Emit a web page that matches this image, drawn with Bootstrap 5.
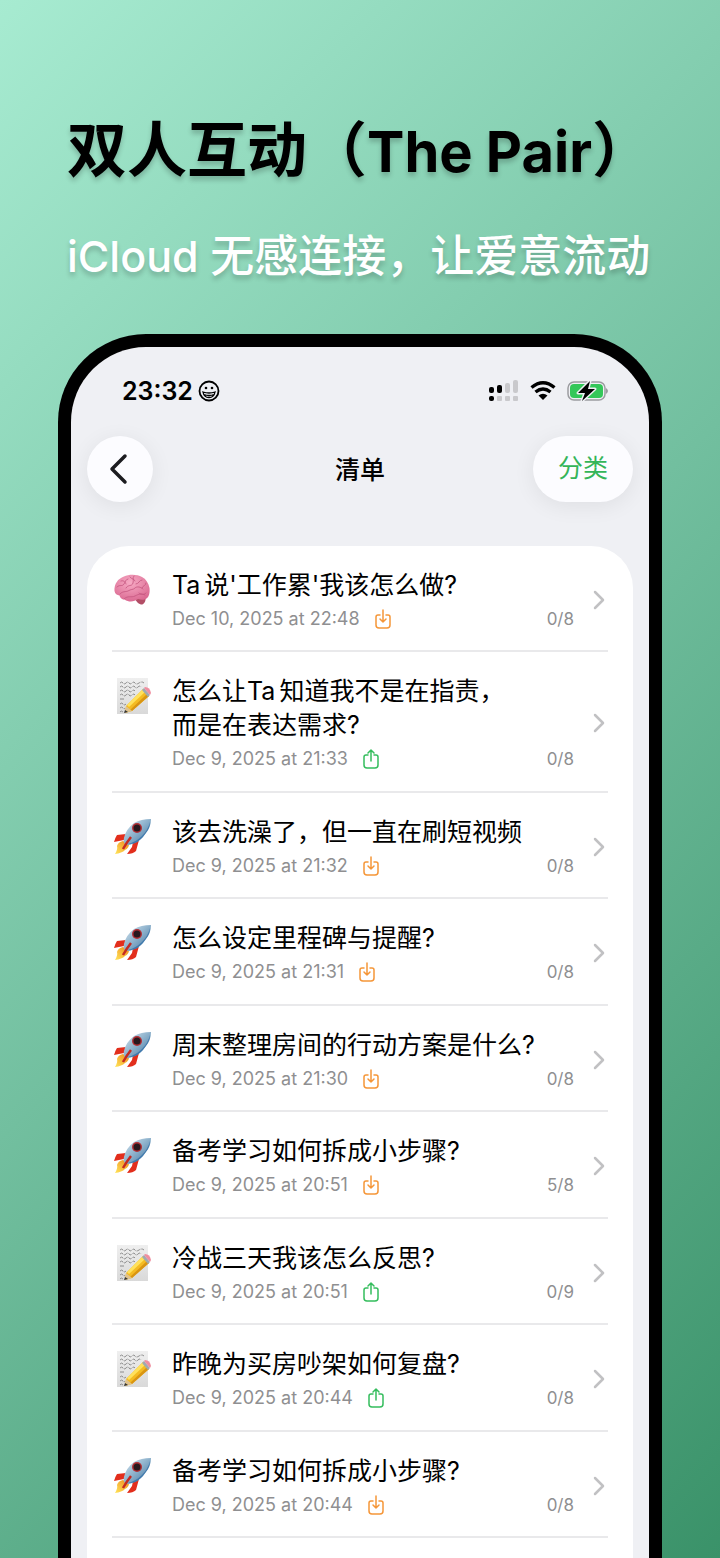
<!DOCTYPE html>
<html lang="zh-CN">
<head>
<meta charset="utf-8">
<meta name="viewport" content="width=device-width, initial-scale=1">
<title>双人互动（The Pair）</title>
<link href="https://cdn.jsdelivr.net/npm/bootstrap@5.3.0/dist/css/bootstrap.min.css" rel="stylesheet">
<style>
body{font-family:Inter,"Noto Sans CJK SC",sans-serif;color:#000}
.promo{background:linear-gradient(135deg,#a7ebd1 0%,#72bf9f 50%,#3a9269 100%);padding:110px 58px 0}
.promo-copy{padding:0 9px;text-shadow:0 4px 5px rgba(0,0,0,.2);white-space:nowrap}
.promo-copy h1{font-size:60px;line-height:80px;font-weight:700}
.promo-copy h1 span{font-size:56px;line-height:1}
.promo-copy p{font-size:44px;line-height:64px;font-weight:500;margin-top:34px}
.promo-copy p span{font-size:43px;line-height:1}
.phone{border:13px solid #000;border-bottom:0;border-radius:88px 88px 0 0;background:#eff0f4;margin-top:46px;min-height:0}
.status-bar{padding:30px 40px 0 51px;height:60px}
.clock{font-size:25px;line-height:28px;font-weight:600}
.top-bar{display:grid;grid-template-columns:1fr auto 1fr;padding:29px 16px 0}
.top-bar h2{font-size:25px;line-height:34px;font-weight:500;padding-top:2px}
.glass{background:#fcfcff;border-radius:33px;height:66px;box-shadow:0 4px 22px rgba(0,0,0,.07)}
.glass:hover{background:#fff}
.back-btn{width:66px}
.sort-btn{width:100px;font-size:25px;color:#34b559}
.topics{background:#fff;border-radius:42px 42px 0 0;margin:44px 16px 0;padding:0 25px 48px}
.topic{padding:22px 0 19px;border-bottom:2px solid #e9e9eb;color:#000}
li:nth-child(even) .topic{padding-bottom:20px}
.topic-icon{width:40px;height:40px;margin:2px 20px 0 0}
.topic-title{font-size:25px;line-height:34px}
.topic-title .latin{margin-right:4px}
.topic-meta{font-size:18px;line-height:24px;margin-top:5px;color:#8f8f91}
.topic-count{font-size:17px}
.direction{width:18px;height:22px;margin-left:14px}
.incoming{color:#f59638}
.outgoing{color:#35bd5d}
.chevron{width:14px;height:22px;margin:0 2px 0 18px}
</style>
</head>
<body>
<svg class="position-absolute" width="0" height="0" aria-hidden="true">
<defs>
<linearGradient id="hull" x1="0" y1="0" x2="1" y2="1"><stop offset="0" stop-color="#dbe9f2"/><stop offset=".45" stop-color="#93b6cf"/><stop offset="1" stop-color="#3b6f9c"/></linearGradient>
<linearGradient id="flame" x1="1" y1="0" x2="0" y2="1"><stop offset="0" stop-color="#f08a1c"/><stop offset="1" stop-color="#ffe65a"/></linearGradient>
<radialGradient id="cortex" cx=".45" cy=".3" r=".75"><stop offset="0" stop-color="#f7aac4"/><stop offset="1" stop-color="#d9668f"/></radialGradient>
<linearGradient id="paper" x1="0" y1="0" x2="0" y2="1"><stop offset="0" stop-color="#efefef"/><stop offset="1" stop-color="#d9d9d9"/></linearGradient>
</defs>
<symbol id="brain" viewBox="0 0 40 40">
<path d="M23 28c1 4 4 6.500 7 6.500 2.500-.5 4-4 3.500-7z" fill="#b24e66"/>
<path d="M2.500 21C2 14 6 8.500 12 6.500c5-2.500 13-2.500 18 .5 4 2 6.500 6 7.500 11 .5 5-.5 9-3 10.500-3 2-6 1-8.500.5-4 3-9 3.500-13.500.5-3 0-4.500-2-5-4-2.500-.5-4.500-1.500-5-4.500z" fill="url(#cortex)"/>
<path d="M8 24c2-3 6-2 8-3 3-2 5-1 7-3s6-1 8 1M12 29c4-4 7-1 11-3s6-3 10-1M5 17c3-3 5 0 7-3s1-4 4-5M14 18c2-4 6-1 7-5s-1-4 1-7M24 14c3 0 3-4 6-4M30 18c1-3 4-2 4-5M9 11c3-1 4 1 5 3M18 7c2 3 4 1 5 4M27 23c2 2 5 2 7 0" fill="none" stroke="#c4557f" stroke-width=".8" stroke-linecap="round"/>
</symbol>
<symbol id="note" viewBox="0 0 40 40">
<path d="M5 2h31v36H5z" fill="url(#paper)"/>
<path d="M8 7q2-2 3 0t3 0 3 0 3 0 3 0 4 0 5 0M8 11q2-2 3 0t3 0 3 0 3 0 3 0 3 0 3 0M8 15q2-2 3 0t3 0 3 0 3 0 3 0M8 19q2-2 3 0t3 0 3 0 3 0 3 0M8 23h4M8 28q2-2 3 0t3 0M8 32q2-2 3 0t2 0M8 36q1-2 3 0" stroke="#777" stroke-width=".8" stroke-dasharray="4 1" fill="none"/>
<path d="M14 30 31 13l6 7-17 15-7 2z" fill="#f4bb22"/><path d="m15 29 16-16 2 3-16 15z" fill="#ffe15b"/><path d="m18 34 17-16 2 2-17 15z" fill="#d99513"/>
<path d="m30 14 2-2 6 7-2 2z" fill="#9faab0"/><path d="m32 12 1-1q5 0 6 6l-1 2z" fill="#f08fa0"/><path d="m14 30 6 5-7 2z" fill="#dfc28d"/><path d="m13 34 3 2-4 1z" fill="#333"/>
</symbol>
<symbol id="rocket" viewBox="0 0 40 40">
<path d="M14 17 5 18Q3 21 2 25l10-2zM21 25l-1 5-5 7q6 0 9-3l3-11z" fill="#e22e1c"/>
<path d="M11 24Q6 25 5 29q1 3-2 8 7-1 10-4 4-2 4-6z" fill="url(#flame)"/>
<path d="M39 2q-10 0-17 4-8 6-10 15-1 4 1 6 3 2 7 0 9-3 14-11 5-6 5-14z" fill="url(#hull)"/>
<path d="M38 5q-2 8-8 14-6 6-14 8 10 1 17-10 5-6 5-12z" fill="#3f79ad"/>
<circle cx="25" cy="11" r="5" fill="#b22f35"/><circle cx="25" cy="11" r="3.500" fill="#28181e"/>
<path d="M19 20q-4 5-8 12" stroke="#c52a22" stroke-width="2.500" fill="none"/>
</symbol>
<symbol id="tray-in" viewBox="0 0 18 22"><path d="M6 7H4Q2 7 2 9v8q0 3 3 3h8q3 0 3-3V9q0-2-2-2h-2M9 2v12M6 11l3 3 3-3" fill="none" stroke="currentColor" stroke-width="1.500" stroke-linecap="round" stroke-linejoin="round"/></symbol>
<symbol id="tray-out" viewBox="0 0 18 22"><path d="M6 7H4Q2 7 2 9v8q0 3 3 3h8q3 0 3-3V9q0-2-2-2h-2M9 13V2M6 5l3-3 3 3" fill="none" stroke="currentColor" stroke-width="1.500" stroke-linecap="round" stroke-linejoin="round"/></symbol>
<symbol id="chev" viewBox="0 0 14 22"><path d="m3 3 8 8-8 8" fill="none" stroke="#c1c1c3" stroke-width="2.500" stroke-linecap="round" stroke-linejoin="round"/></symbol>
</svg>
<main class="promo vh-100 overflow-hidden d-flex flex-column">
<header class="promo-copy">
<h1 class="mb-0">双人互动（<span>The Pair</span>）</h1>
<p class="mb-0 text-white"><span>iCloud</span> 无感连接，让爱意流动</p>
</header>
<section class="phone flex-grow-1 overflow-hidden">
<div class="status-bar d-flex justify-content-between align-items-start">
<div class="d-flex align-items-center gap-1">
<span class="clock">23:32</span>
<svg width="24" height="24" viewBox="0 0 24 24" fill="none" stroke="#000"><circle cx="12" cy="12" r="9.500" stroke-width="1.800"/><circle cx="9" cy="9" r="1.300" fill="#000" stroke="none"/><circle cx="15" cy="9" r="1.300" fill="#000" stroke="none"/><path d="M6 13q6 2 12 0-1 5.500-6 5.500t-6-5.500zM7 15.500q5 2 10 0" stroke-width="1.300"/></svg>
</div>
<div class="d-flex align-items-center">
<svg width="30" height="28" viewBox="0 0 30 28"><g fill="#000"><rect x="0" y="10" width="5" height="6" rx="2"/><rect x="8" y="8" width="5" height="8" rx="2"/><rect x="0" y="19" width="5" height="5" rx="2"/></g><g fill="#c9c9cc"><rect x="16" y="6" width="5" height="10" rx="2"/><rect x="24" y="3" width="5" height="13" rx="2"/><rect x="8" y="19" width="5" height="5" rx="1"/><rect x="16" y="19" width="5" height="5" rx="1"/><rect x="24" y="19" width="5" height="5" rx="1"/></g></svg>
<svg class="ms-2" width="34" height="28" viewBox="1 0 34 28"><g fill="none" stroke="#000" stroke-width="3.400"><path d="M5.500 10.500q11.500-9.500 23 0"/><path d="M9.500 15q7.500-6 15 0"/></g><path d="M12.500 18.500q4.500-3.500 9 0L17 23z"/></svg>
<svg class="ms-1" width="44" height="28" viewBox="0 0 44 28"><rect x="3" y="5" width="37" height="18" rx="6" fill="none" stroke="#9c9ca0" stroke-width="1.500"/><path d="M41 11q4 3 0 6z" fill="#9c9ca0"/><rect x="5" y="7" width="33" height="14" rx="4" fill="#34c759"/><path d="M25 4 13 16h7l-3 8 13-12h-7z" stroke="#eff0f4" stroke-width="3" stroke-linejoin="round" paint-order="stroke"/></svg>
</div>
</div>
<nav class="top-bar align-items-center">
<button type="button" class="btn glass back-btn p-0 border-0" aria-label="返回"><svg width="24" height="32" viewBox="0 0 24 32"><path d="M17 3 4 16l13 13" fill="none" stroke="#1c1c20" stroke-width="3.500" stroke-linecap="round" stroke-linejoin="round"/></svg></button>
<h2 class="mb-0">清单</h2>
<button type="button" class="btn glass sort-btn p-0 border-0 ms-auto">分类</button>
</nav>
<ul class="topics list-unstyled mb-0" id="topics"></ul>
</section>
</main>
<script src="https://cdn.jsdelivr.net/npm/bootstrap@5.3.0/dist/js/bootstrap.bundle.min.js"></script>
<script>
const topics=[
['brain',"<span class=\"latin\">Ta</span>说'工作累'我该怎么做?",'Dec 10, 2025 at 22:48','in','0/8'],
['note','怎么让<span class="latin">Ta</span>知道我不是在指责，<br>而是在表达需求?','Dec 9, 2025 at 21:33','out','0/8'],
['rocket','该去洗澡了，但一直在刷短视频','Dec 9, 2025 at 21:32','in','0/8'],
['rocket','怎么设定里程碑与提醒?','Dec 9, 2025 at 21:31','in','0/8'],
['rocket','周末整理房间的行动方案是什么?','Dec 9, 2025 at 21:30','in','0/8'],
['rocket','备考学习如何拆成小步骤?','Dec 9, 2025 at 20:51','in','5/8'],
['note','冷战三天我该怎么反思?','Dec 9, 2025 at 20:51','out','0/9'],
['note','昨晚为买房吵架如何复盘?','Dec 9, 2025 at 20:44','out','0/8'],
['rocket','备考学习如何拆成小步骤?','Dec 9, 2025 at 20:44','in','0/8']];
document.getElementById('topics').innerHTML=topics.map(([icon,title,date,dir,count])=>`
<li><a href="#" class="topic d-flex align-items-center text-decoration-none">
<svg class="topic-icon align-self-start flex-shrink-0"><use href="#${icon}"/></svg>
<div class="flex-grow-1"><div class="topic-title">${title}</div>
<div class="topic-meta d-flex align-items-center"><span>${date}</span><svg class="direction ${dir==='in'?'incoming':'outgoing'}"><use href="#tray-${dir}"/></svg><span class="topic-count ms-auto">${count}</span></div></div>
<svg class="chevron flex-shrink-0"><use href="#chev"/></svg></a></li>`).join('');
</script>
</body>
</html>
